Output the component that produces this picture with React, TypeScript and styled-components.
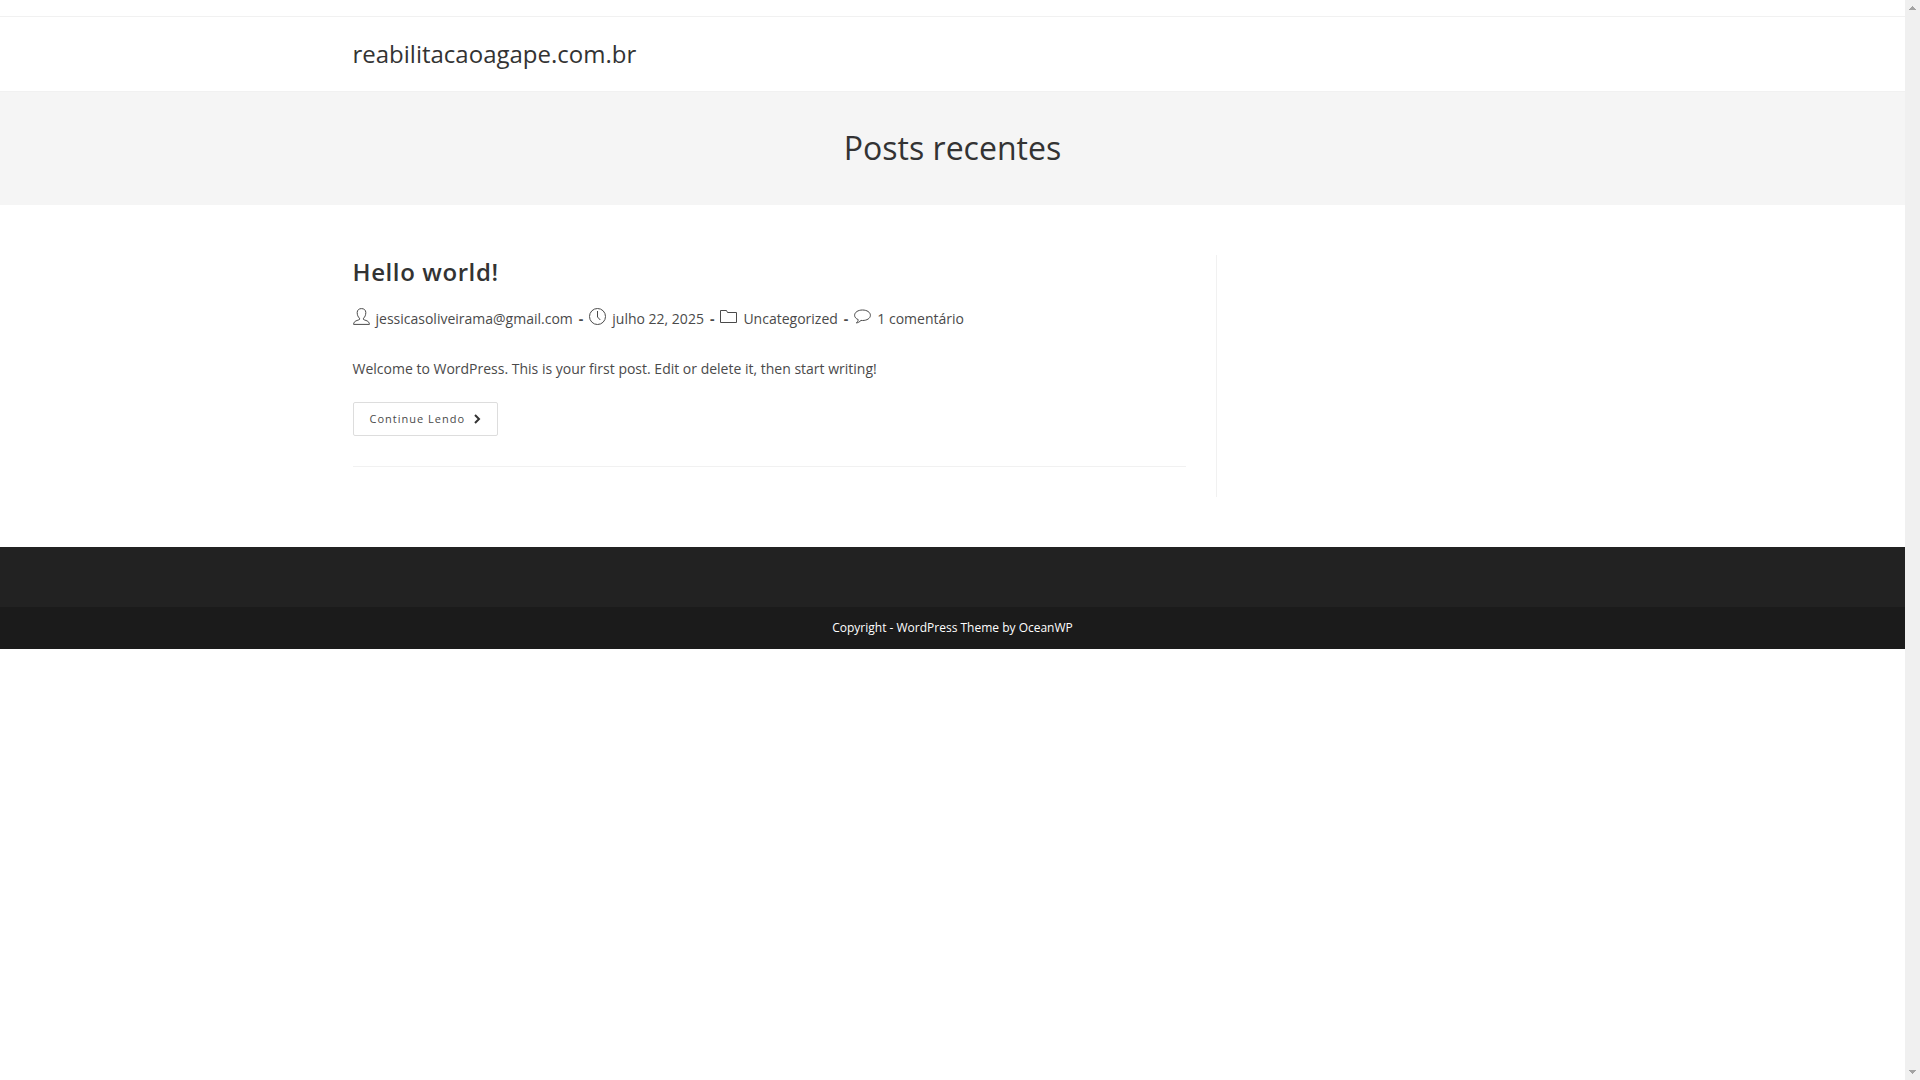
import React from "react";
import styled, { createGlobalStyle } from "styled-components";

const GlobalStyle = createGlobalStyle`
  *, *::before, *::after { box-sizing: border-box; }
  body {
    margin: 0;
    background: #fff;
    color: #4a4a4a;
    font-family: "Open Sans", "Noto Sans", sans-serif;
    font-size: 14px;
    line-height: 25px;
  }
  a { color: inherit; text-decoration: none; }
`;

const Viewport = styled.div`
  display: grid;
  grid-template-columns: minmax(0, 1fr) 15px;
  min-height: 100vh;
`;

const Rail = styled.div`
  display: flex;
  flex-direction: column;
  justify-content: space-between;
  align-items: center;
  padding: 6px 0;
  background: #f0f0f0;

  svg { display: block; fill: #a3a3a3; }
`;

const Container = styled.div`
  width: 100%;
  max-width: 1200px;
  margin: 0 auto;
`;

const TopBar = styled.div`
  height: 17px;
  border-bottom: 1px solid #f1f1f1;
`;

const Header = styled.header`
  border-bottom: 1px solid #f1f1f1;
`;

const SiteName = styled.a`
  display: inline-block;
  vertical-align: top;
  font-size: 24px;
  line-height: 74px;
  color: #333;
`;

const PageHeader = styled.div`
  padding: 33px 0 35px;
  background: #f5f5f5;
  text-align: center;
`;

const PageTitle = styled.h1`
  margin: 0;
  font-size: 32px;
  font-weight: 400;
  line-height: 45px;
  color: #333;
`;

const Columns = styled(Container)`
  display: grid;
  grid-template-columns: 72% 28%;
  padding: 50px 0;
`;

const Primary = styled.main`
  padding-right: 30px;
  border-right: 1px solid #f1f1f1;
`;

const Post = styled.article`
  margin-bottom: 30px;
  padding-bottom: 30px;
  border-bottom: 1px solid #f1f1f1;
`;

const PostTitle = styled.h2`
  margin: 0 0 16px;
  font-size: 24px;
  font-weight: 600;
  line-height: 34px;
  letter-spacing: 0.6px;
  color: #333;
`;

const Meta = styled.ul`
  display: flex;
  margin: 0 0 24px;
  padding: 0;
  list-style: none;
`;

const MetaItem = styled.li`
  display: flex;
  line-height: 27px;

  svg {
    flex: none;
    width: 17px;
    height: 17px;
    margin: 3px 6px 0 0;
    fill: none;
    stroke: #4a4a4a;
  }

  &:not(:last-child)::after {
    content: "-";
    padding: 0 6px;
    font-weight: 700;
  }
`;

const Excerpt = styled.p`
  margin: 0 0 21px;
`;

const ReadMore = styled.a`
  display: inline-flex;
  align-items: center;
  gap: 8px;
  height: 34px;
  padding: 0 16px;
  border: 1px solid #ddd;
  border-radius: 2px;
  font-size: 11px;
  line-height: 32px;
  letter-spacing: 1px;
  vertical-align: top;

  svg { fill: none; stroke: #333; stroke-width: 2; }
`;

const FooterWidgets = styled.div`
  height: 60px;
  background: #222;
`;

const Copyright = styled.div`
  padding: 10px 0;
  background: #1b1b1b;
  color: #fff;
  font-size: 12px;
  line-height: 22px;
  text-align: center;
`;

const icons = {
  user: (
    <svg viewBox="0 0 17 17" aria-hidden="true">
      <path d="M6.5 10.2C5 9 4.200 7 4.200 4.500C4.200 2 6 .6 8.500 .6S12.800 2 12.800 4.500C12.800 7 12 9 10.500 10.200V11.500C12 12.500 16.400 12.600 16.400 16.400H.6C.6 12.600 5 12.500 6.500 11.500Z" />
    </svg>
  ),
  clock: (
    <svg viewBox="0 0 17 17" aria-hidden="true">
      <circle cx="8.500" cy="8.500" r="8" />
      <path d="M8.500 3v6l2.800 3" />
    </svg>
  ),
  folder: (
    <svg viewBox="0 0 17 17" aria-hidden="true">
      <path d="M.5 14.500V2.500H6.500L7.500 4.500H16.500V14.500Z" />
    </svg>
  ),
  comment: (
    <svg viewBox="0 0 17 17" aria-hidden="true">
      <path d="M4.200 11.600C2 10.700 .6 9.200 .6 7.300C.6 4.300 4 2 8.500 2S16.400 4.300 16.400 7.300S13 12.500 8.500 12.500L7 12.400C5.600 13.900 4 14.700 2.300 15C3.500 13.900 4.200 12.800 4.200 11.600Z" />
    </svg>
  ),
};

const meta: { icon: keyof typeof icons; text: string; link: boolean }[] = [
  { icon: "user", text: "jessicasoliveirama@gmail.com", link: true },
  { icon: "clock", text: "julho 22, 2025", link: false },
  { icon: "folder", text: "Uncategorized", link: true },
  { icon: "comment", text: "1 comentário", link: true },
];

export default function App() {
  return (
    <>
      <GlobalStyle />
      <Viewport>
        <div>
          <TopBar />
          <Header>
            <Container>
              <SiteName href="#">reabilitacaoagape.com.br</SiteName>
            </Container>
          </Header>
          <PageHeader>
            <PageTitle>Posts recentes</PageTitle>
          </PageHeader>
          <Columns>
            <Primary>
              <Post>
                <PostTitle>
                  <a href="#">Hello world!</a>
                </PostTitle>
                <Meta>
                  {meta.map(({ icon, text, link }) => (
                    <MetaItem key={icon}>
                      {icons[icon]}
                      {link ? <a href="#">{text}</a> : <span>{text}</span>}
                    </MetaItem>
                  ))}
                </Meta>
                <Excerpt>
                  Welcome to WordPress. This is your first post. Edit or delete it, then start writing!
                </Excerpt>
                <ReadMore href="#">
                  Continue Lendo
                  <svg width="8" height="10" viewBox="0 0 8 10" aria-hidden="true">
                    <path d="M2 1l4 4-4 4" />
                  </svg>
                </ReadMore>
              </Post>
            </Primary>
          </Columns>
          <footer>
            <FooterWidgets />
            <Copyright>Copyright - WordPress Theme by OceanWP</Copyright>
          </footer>
        </div>
        <Rail aria-hidden="true">
          <svg width="7" height="4" viewBox="0 0 7 4">
            <path d="M3 0h1v1h1v1h1v1h1v1H0V3h1V2h1V1h1z" />
          </svg>
          <svg width="7" height="4" viewBox="0 0 7 4">
            <path d="M0 0h7v1H6v1H5v1H4v1H3V3H2V2H1V1H0z" />
          </svg>
        </Rail>
      </Viewport>
    </>
  );
}
